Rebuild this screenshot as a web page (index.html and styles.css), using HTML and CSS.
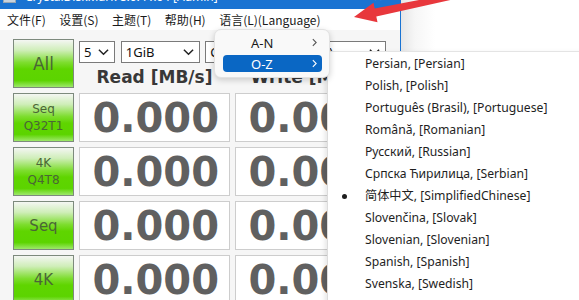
FILE: index.html
```html
<!DOCTYPE html>
<html>
<head>
<meta charset="utf-8">
<link rel="stylesheet" href="styles.css">
</head>
<body>
<div class="screen">
  <div class="window">
    <div class="titlebar">
      <div class="title-row">
        <span class="app-icon"></span>
        <span class="title">CrystalDiskMark 8.0.4 x64 [Admin]</span>
        <span class="close">✕</span>
      </div>
    </div>
    <div class="menubar">
      <span class="mi">文件(F)</span>
      <span class="mi">设置(S)</span>
      <span class="mi">主题(T)</span>
      <span class="mi">帮助(H)</span>
      <span class="mi">语言(L)(Language)</span>
    </div>
    <div class="content">
      <div class="grid">
        <div class="btn btn-big">All</div>
        <div class="head">
          <div class="selects">
            <div class="sel sel-count"><span>5</span><svg class="chev" viewBox="0 0 12 8"><polyline points="1,1.5 6,6.5 11,1.5"/></svg></div>
            <div class="sel sel-size"><span>1GiB</span><svg class="chev" viewBox="0 0 12 8"><polyline points="1,1.5 6,6.5 11,1.5"/></svg></div>
            <div class="sel sel-drive"><span>C: 36% (170/476GiB)</span><svg class="chev" viewBox="0 0 12 8"><polyline points="1,1.5 6,6.5 11,1.5"/></svg></div>
          </div>
          <div class="labels">
            <div class="lbl">Read [MB/s]</div>
            <div class="lbl">Write [MB/s]</div>
          </div>
        </div>

        <div class="btn btn-small">Seq<br>Q32T1</div>
        <div class="val">0.000</div>
        <div class="val">0.000</div>

        <div class="btn btn-small">4K<br>Q4T8</div>
        <div class="val">0.000</div>
        <div class="val">0.000</div>

        <div class="btn btn-mid">Seq</div>
        <div class="val">0.000</div>
        <div class="val">0.000</div>

        <div class="btn btn-mid">4K</div>
        <div class="val">0.000</div>
        <div class="val">0.000</div>
      </div>
    </div>
  </div>
  <div class="desk"></div>

  <div class="popup">
    <div class="pitem"><span>A-N</span><svg class="arrow-r" viewBox="0 0 6 10"><polyline points="1,1 5,5 1,9"/></svg></div>
    <div class="pitem active"><span>O-Z</span><svg class="arrow-r" viewBox="0 0 6 10"><polyline points="1,1 5,5 1,9"/></svg></div>
  </div>

  <div class="submenu">
    <div class="sitem">Persian, [Persian]</div>
    <div class="sitem">Polish, [Polish]</div>
    <div class="sitem">Português (Brasil), [Portuguese]</div>
    <div class="sitem">Română, [Romanian]</div>
    <div class="sitem">Русский, [Russian]</div>
    <div class="sitem">Српска Ћирилица, [Serbian]</div>
    <div class="sitem checked">简体中文, [SimplifiedChinese]</div>
    <div class="sitem">Slovenčina, [Slovak]</div>
    <div class="sitem">Slovenian, [Slovenian]</div>
    <div class="sitem">Spanish, [Spanish]</div>
    <div class="sitem">Svenska, [Swedish]</div>
    <div class="sitem">Türkçe, [Turkish]</div>
  </div>

  <svg class="red-arrow" viewBox="0 0 579 40" width="579" height="40">
    <polygon points="354,17 373.5,2.7 374.7,8.6 451.4,-6.3 452.6,-0.5 376.3,16.4 377.5,22.3"/>
  </svg>
</div>
</body>
</html>
```

FILE: styles.css
```css
* { box-sizing: border-box; }
html, body { margin: 0; padding: 0; }
body {
  width: 579px;
  height: 300px;
  overflow: hidden;
  background: #ffffff;
  font-family: "Noto Sans", "Noto Sans CJK SC", sans-serif;
}
.screen {
  position: relative;
  width: 579px;
  height: 300px;
  display: flex;
  overflow: hidden;
}
.window {
  width: 401px;
  height: 300px;
  flex: none;
  border-right: 1px solid #1a73d2;
  display: flex;
  flex-direction: column;
  background: #f6f6f6;
}
.desk {
  flex: 1;
  background: linear-gradient(to right, #e6e6e6 0px, #f6f6f6 14px, #ffffff 34px);
}
.titlebar {
  height: 9px;
  overflow: hidden;
  background: #1a73d2;
  flex: none;
}
.title-row {
  margin-top: -13px;
  height: 18px;
  display: flex;
  align-items: center;
  color: #ffffff;
  font-size: 12px;
  font-family: "Noto Sans", sans-serif;
}
.app-icon {
  width: 13px;
  height: 13px;
  margin-left: 3px;
  background: #c9d3dd;
  border: 1px solid #9aa8b5;
}
.title { margin-left: 9px; flex: 1; }
.close { margin-right: 17px; font-size: 12px; }

.menubar {
  height: 21px;
  background: #ffffff;
  display: flex;
  align-items: center;
  padding-left: 7px;
  padding-bottom: 1px;
  font-family: "Noto Sans CJK SC", sans-serif;
  font-size: 12px;
  color: #1a1a1a;
  flex: none;
}
.mi { margin-right: 13.5px; white-space: nowrap; }

.content {
  padding: 9px 0 0 13px;
  flex: 1;
}
.grid {
  display: grid;
  grid-template-columns: 61px 151px 151px;
  grid-template-rows: 49px 49px 49px 49px 49px;
  column-gap: 5px;
  row-gap: 5px;
}
.btn {
  border: 1px solid #7d8a7d;
  background: linear-gradient(to bottom, #f4f6f3 0%, #cfeeb8 22%, #7ddd2e 48%, #5fd500 62%, #5cd400 86%, #9de86a 100%);
  color: #4a6636;
  font-family: "DejaVu Sans", sans-serif;
  display: flex;
  align-items: center;
  justify-content: center;
  text-align: center;
}
.btn-big { font-size: 17px; }
.btn-mid { font-size: 15px; }
.btn-small { font-size: 12px; line-height: 17px; }

.head {
  grid-column: 2 / 4;
  display: flex;
  flex-direction: column;
  padding-top: 2px;
}
.selects {
  display: flex;
  gap: 5px;
  height: 22px;
}
.sel {
  height: 22px;
  background: #ffffff;
  border: 1px solid #7a7a7a;
  display: flex;
  align-items: center;
  justify-content: space-between;
  padding: 0 5px 0 4px;
  font-size: 13px;
  color: #111;
  overflow: hidden;
  white-space: nowrap;
}
.sel-count { width: 36px; }
.sel-size { width: 80px; margin-left: 1px; }
.sel-drive { width: 182px; }
.chev {
  width: 11px;
  height: 8px;
  flex: none;
  fill: none;
  stroke: #222;
  stroke-width: 1.6;
}
.labels {
  display: flex;
  gap: 5px;
  margin-top: 1px;
  height: 26px;
}
.lbl {
  width: 151px;
  text-align: center;
  font-family: "DejaVu Sans", sans-serif;
  font-weight: bold;
  font-size: 17px;
  line-height: 26px;
  color: #383838;
  white-space: nowrap;
}
.val {
  background: #ffffff;
  border: 1px solid #cdcdcd;
  font-family: "DejaVu Sans", sans-serif;
  font-weight: bold;
  font-size: 40px;
  color: #606060;
  display: flex;
  align-items: center;
  justify-content: flex-end;
  padding-right: 10px;
  letter-spacing: 0;
}

.popup {
  position: absolute;
  left: 214px;
  top: 29px;
  width: 116px;
  height: 49px;
  background: #f9f9f9;
  border: 1px solid #e2e2e2;
  border-radius: 7px;
  box-shadow: 0 2px 6px rgba(0,0,0,0.18);
  padding: 4px 7px 4px 8px;
  display: flex;
  flex-direction: column;
  gap: 4px;
  z-index: 3;
}
.pitem {
  height: 17px;
  border-radius: 4px;
  display: flex;
  align-items: center;
  justify-content: space-between;
  padding: 0 5px 0 28px;
  font-size: 13px;
  color: #1a1a1a;
}
.pitem.active {
  background: #0a67c4;
  color: #ffffff;
}
.arrow-r {
  width: 5px;
  height: 9px;
  fill: none;
  stroke: #555;
  stroke-width: 1.3;
}
.pitem.active .arrow-r { stroke: #ffffff; }

.submenu {
  position: absolute;
  left: 327px;
  top: 51px;
  width: 262px;
  height: 260px;
  background: #ffffff;
  border-left: 1px solid #dcdcdc;
  border-top: 1px solid #e4e4e4;
  box-shadow: -2px 2px 5px rgba(0,0,0,0.10);
  padding-top: 1px;
  z-index: 2;
}
.sitem {
  position: relative;
  height: 22px;
  line-height: 22px;
  padding-left: 37px;
  font-size: 12.2px;
  color: #1e1e1e;
  white-space: nowrap;
  font-family: "Noto Sans", "Noto Sans CJK SC", sans-serif;
}
.sitem.checked::before {
  content: "";
  position: absolute;
  left: 14px;
  top: 9px;
  width: 5px;
  height: 5px;
  border-radius: 50%;
  background: #1e1e1e;
}

.red-arrow {
  position: absolute;
  left: 0;
  top: 0;
  z-index: 5;
  fill: #e8373c;
}
```
